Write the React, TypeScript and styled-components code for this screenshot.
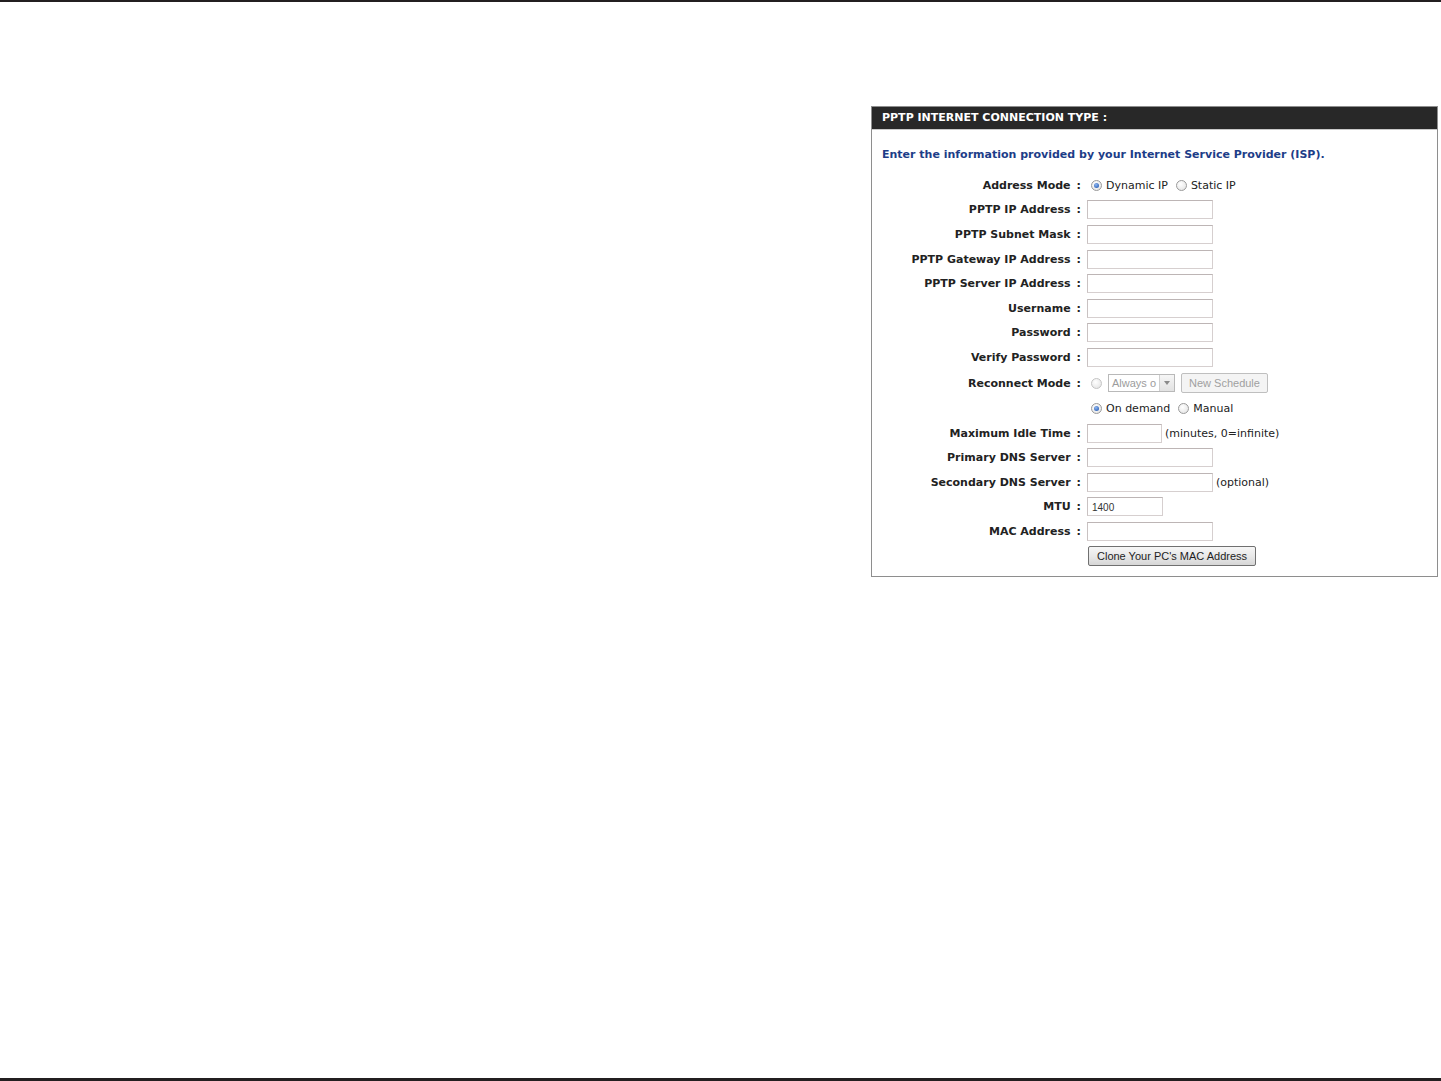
import React from 'react';
import styled, { createGlobalStyle } from 'styled-components';

const GlobalStyle = createGlobalStyle`
  html, body {
    margin: 0;
    padding: 0;
    background: #fff;
  }
  body {
    font-family: "DejaVu Sans", Verdana, sans-serif;
  }
`;

const Page = styled.div`
  box-sizing: border-box;
  width: 1441px;
  height: 1081px;
  border-top: 2px solid #231f20;
  border-bottom: 3px solid #231f20;
  padding: 104px 0 0 871px;
`;

const Panel = styled.section`
  width: 567px;
  box-sizing: border-box;
  border: 1px solid #8e8e8e;
  background: #fff;
  padding-bottom: 8px;
`;

const PanelHeader = styled.div`
  height: 22px;
  background: #282828;
  color: #fff;
  font-size: 11px;
  font-weight: bold;
  line-height: 22px;
  padding-left: 10px;
  border-bottom: 1px solid #c9c9c9;
`;

const Intro = styled.p`
  margin: 0;
  padding: 17px 0 11px 10px;
  font-size: 11px;
  line-height: 15px;
  font-weight: bold;
  color: #1d3d88;
`;

const Row = styled.div<{ $h?: number }>`
  display: grid;
  grid-template-columns: 211px 1fr;
  column-gap: 4px;
  align-items: center;
  height: ${(p) => p.$h ?? 24.6}px;
`;

const Label = styled.div`
  text-align: right;
  font-size: 11px;
  font-weight: bold;
  color: #222;
  white-space: nowrap;
  padding-right: 2px;
`;

const Colon = styled.span`
  margin-left: 6px;
`;

const Field = styled.div`
  display: flex;
  align-items: center;
  font-size: 11px;
  color: #222;
  white-space: nowrap;
`;

const TextBox = styled.input<{ $w?: number }>`
  box-sizing: border-box;
  width: ${(p) => p.$w ?? 126}px;
  height: 19px;
  margin: 0;
  padding: 1px 4px 0;
  border: 1px solid #d6cfcf;
  border-top-color: #bdb5b5;
  border-left-color: #c9c2c2;
  background: #fff;
  font-family: "Liberation Sans", Arial, sans-serif;
  font-size: 10px;
  color: #333;
  outline: none;
`;

const Hint = styled.span`
  margin-left: 3px;
  font-size: 11px;
  color: #222;
`;

const Radio = styled.span<{ $on?: boolean; $faded?: boolean }>`
  position: relative;
  box-sizing: border-box;
  width: 11px;
  height: 11px;
  border-radius: 50%;
  margin: 0 4px 0 4px;
  border: 1px solid ${(p) => (p.$faded ? '#c4c4c4' : '#9a9a9a')};
  background: radial-gradient(circle at 40% 35%, #fff 0%, #e6e6e6 80%);
  flex: none;

  &::after {
    content: '';
    display: ${(p) => (p.$on ? 'block' : 'none')};
    position: absolute;
    left: 2px;
    top: 2px;
    width: 5px;
    height: 5px;
    border-radius: 50%;
    background: radial-gradient(circle at 40% 35%, #8fb7f0 0%, #2e62b8 80%);
  }
`;

const RadioText = styled.span`
  margin-right: 4px;
`;

const Select = styled.div`
  box-sizing: border-box;
  display: flex;
  align-items: center;
  width: 67px;
  height: 18px;
  margin-left: 2px;
  border: 1px solid #b9b9b9;
  background: #fff;
  font-family: "Liberation Sans", Arial, sans-serif;
  font-size: 11px;
  color: #9c9c9c;
  overflow: hidden;
`;

const SelectValue = styled.span`
  flex: 1;
  padding-left: 3px;
  overflow: hidden;
`;

const SelectArrow = styled.div`
  box-sizing: border-box;
  width: 15px;
  height: 100%;
  border-left: 1px solid #cfcfcf;
  background: linear-gradient(#f6f6f6, #e2e2e2);
  display: flex;
  align-items: center;
  justify-content: center;

  &::before {
    content: '';
    border-left: 3px solid transparent;
    border-right: 3px solid transparent;
    border-top: 4px solid #8a8a8a;
  }
`;

const Button = styled.button<{ $disabled?: boolean }>`
  box-sizing: border-box;
  height: 20px;
  margin: 0 0 0 ${(p) => (p.$disabled ? 6 : 1)}px;
  padding: 0 ${(p) => (p.$disabled ? 7 : 8)}px;
  border: 1px solid ${(p) => (p.$disabled ? '#bfbfbf' : '#707070')};
  border-radius: 2px;
  background: ${(p) =>
    p.$disabled ? '#f4f4f4' : 'linear-gradient(#f6f6f6 0%, #e9e9e9 50%, #d6d6d6 100%)'};
  font-family: "Liberation Sans", Arial, sans-serif;
  font-size: 11px;
  color: ${(p) => (p.$disabled ? '#a0a0a0' : '#1e1e1e')};
  cursor: default;
`;

type FieldRow = { label: string; w?: number; value?: string; hint?: string };

const textRows: FieldRow[] = [
  { label: 'PPTP IP Address' },
  { label: 'PPTP Subnet Mask' },
  { label: 'PPTP Gateway IP Address' },
  { label: 'PPTP Server IP Address' },
  { label: 'Username' },
  { label: 'Password' },
  { label: 'Verify Password' },
];

const lowerRows: FieldRow[] = [
  { label: 'Maximum Idle Time', w: 75, hint: '(minutes, 0=infinite)' },
  { label: 'Primary DNS Server' },
  { label: 'Secondary DNS Server', hint: '(optional)' },
  { label: 'MTU', w: 76, value: '1400' },
  { label: 'MAC Address' },
];

const RowLabel: React.FC<{ text: string }> = ({ text }) => (
  <Label>
    {text}
    <Colon>:</Colon>
  </Label>
);

const TextRow: React.FC<FieldRow> = ({ label, w, value, hint }) => (
  <Row>
    <RowLabel text={label} />
    <Field>
      <TextBox $w={w} defaultValue={value} />
      {hint && <Hint>{hint}</Hint>}
    </Field>
  </Row>
);

export default function App() {
  return (
    <>
      <GlobalStyle />
      <Page>
        <Panel>
          <PanelHeader>PPTP INTERNET CONNECTION TYPE :</PanelHeader>
          <Intro>Enter the information provided by your Internet Service Provider (ISP).</Intro>

          <Row>
            <RowLabel text="Address Mode" />
            <Field>
              <Radio $on />
              <RadioText>Dynamic IP</RadioText>
              <Radio />
              <RadioText>Static IP</RadioText>
            </Field>
          </Row>

          {textRows.map((r) => (
            <TextRow key={r.label} {...r} />
          ))}

          <Row $h={27}>
            <RowLabel text="Reconnect Mode" />
            <Field>
              <Radio $faded />
              <Select>
                <SelectValue>Always o</SelectValue>
                <SelectArrow />
              </Select>
              <Button $disabled>New Schedule</Button>
            </Field>
          </Row>

          <Row $h={24}>
            <div />
            <Field>
              <Radio $on />
              <RadioText>On demand</RadioText>
              <Radio />
              <RadioText>Manual</RadioText>
            </Field>
          </Row>

          {lowerRows.map((r) => (
            <TextRow key={r.label} {...r} />
          ))}

          <Row>
            <div />
            <Field>
              <Button>Clone Your PC's MAC Address</Button>
            </Field>
          </Row>
        </Panel>
      </Page>
    </>
  );
}
